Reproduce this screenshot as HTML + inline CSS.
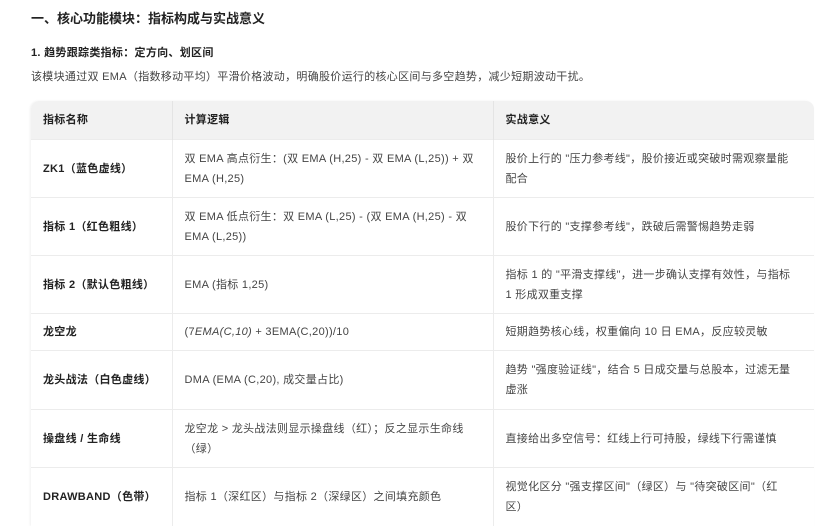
<!DOCTYPE html>
<html><head><meta charset="utf-8"><style>
body{margin:0;width:829px;height:518px;overflow:hidden;background:#fff;font-family:"Liberation Sans","Noto Sans CJK SC",sans-serif;color:#333;letter-spacing:.3px;}
h1{position:absolute;left:31px;top:8px;margin:0;font-size:13px;font-weight:bold;color:#222;letter-spacing:0;}
h2{position:absolute;left:31px;top:44px;margin:0;font-size:11px;font-weight:bold;color:#222;}
p{position:absolute;left:31px;top:68px;margin:0;font-size:11px;color:#444;}
table{position:absolute;left:31px;top:101px;width:783px;border-collapse:collapse;font-size:11px;line-height:20px;border-radius:8px 8px 0 0;overflow:hidden;box-shadow:-1px 0 2px rgba(0,0,0,.06);}
th{background:#f2f2f2;text-align:left;font-weight:bold;color:#222;height:38px;padding:0 12px;border-right:1px solid #e4e4e4;}
td{padding:0 12px;border-top:1px solid #ececec;border-right:1px solid #ececec;color:#444;}
td:first-child{font-weight:bold;color:#222;}
th:last-child,td:last-child{border-right:none;}
td:last-child{padding-right:19px;}
col.a{width:141px}col.b{width:321px}
</style></head><body>
<h1>一、核心功能模块：指标构成与实战意义</h1>
<h2>1. 趋势跟踪类指标：定方向、划区间</h2>
<p>该模块通过双 EMA（指数移动平均）平滑价格波动，明确股价运行的核心区间与多空趋势，减少短期波动干扰。</p>
<table><colgroup><col class="a"><col class="b"><col></colgroup>
<tr><th>指标名称</th><th>计算逻辑</th><th>实战意义</th></tr>
<tr style="height:58px"><td>ZK1（蓝色虚线）</td><td>双 EMA 高点衍生：(双 EMA (H,25) - 双 EMA (L,25)) + 双 EMA (H,25)</td><td>股价上行的 "压力参考线"，股价接近或突破时需观察量能配合</td></tr>
<tr style="height:58px"><td>指标 1（红色粗线）</td><td>双 EMA 低点衍生：双 EMA (L,25) - (双 EMA (H,25) - 双 EMA (L,25))</td><td>股价下行的 "支撑参考线"，跌破后需警惕趋势走弱</td></tr>
<tr style="height:58px"><td>指标 2（默认色粗线）</td><td>EMA (指标 1,25)</td><td>指标 1 的 "平滑支撑线"，进一步确认支撑有效性，与指标 1 形成双重支撑</td></tr>
<tr style="height:37px"><td>龙空龙</td><td>(7<i>EMA(C,10)</i> + 3EMA(C,20))/10</td><td>短期趋势核心线，权重偏向 10 日 EMA，反应较灵敏</td></tr>
<tr style="height:59px"><td>龙头战法（白色虚线）</td><td>DMA (EMA (C,20), 成交量占比)</td><td>趋势 "强度验证线"，结合 5 日成交量与总股本，过滤无量虚涨</td></tr>
<tr style="height:58px"><td>操盘线 / 生命线</td><td>龙空龙 &gt; 龙头战法则显示操盘线（红）；反之显示生命线（绿）</td><td>直接给出多空信号：红线上行可持股，绿线下行需谨慎</td></tr>
<tr style="height:58px"><td>DRAWBAND（色带）</td><td>指标 1（深红区）与指标 2（深绿区）之间填充颜色</td><td>视觉化区分 "强支撑区间"（绿区）与 "待突破区间"（红<br>区）</td></tr>
</table>
</body></html>
